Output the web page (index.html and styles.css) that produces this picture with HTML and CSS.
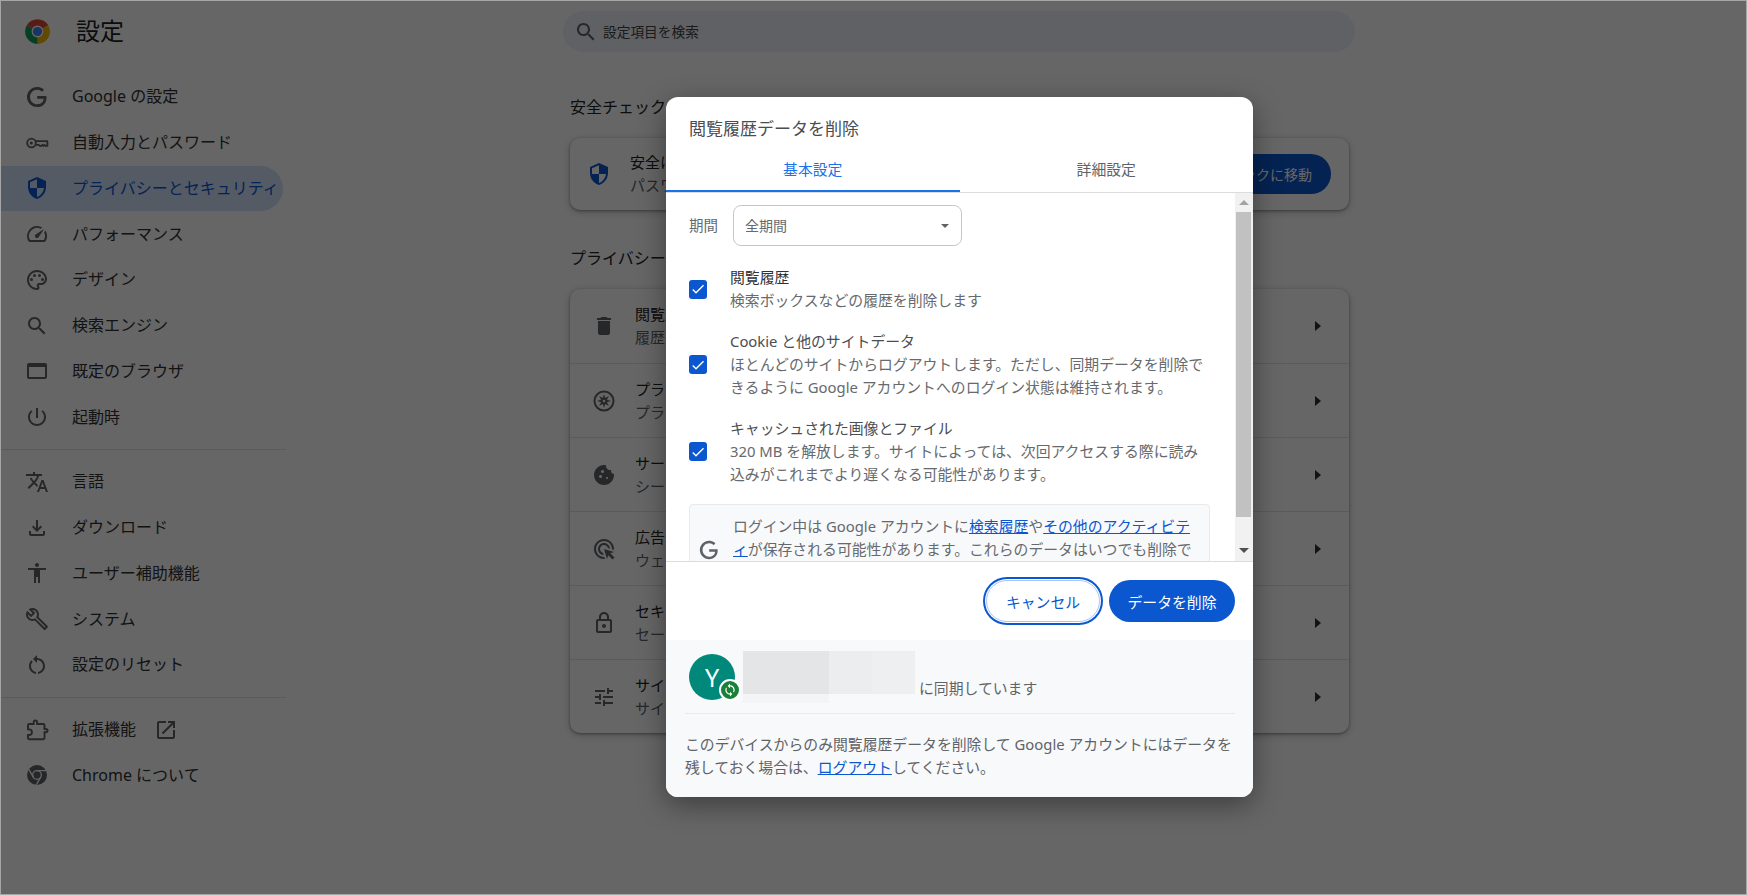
FILE: index.html
```html
<!DOCTYPE html>
<html lang="ja">
<head>
<meta charset="UTF-8">
<meta name="viewport" content="width=device-width, initial-scale=1.0">
<title>設定 - プライバシーとセキュリティ</title>
<link rel="stylesheet" href="styles.css">
</head>
<body>

<!-- icon sprite -->
<svg class="sprite" xmlns="http://www.w3.org/2000/svg">
<symbol id="i-g" viewBox="0 0 24 24"><path d="M21.35 11.1h-9.17v2.73h6.51c-.33 3.81-3.5 5.44-6.5 5.44C8.36 19.27 5 16.25 5 12c0-4.1 3.2-7.27 7.2-7.27 3.09 0 4.9 1.97 4.9 1.97L19 4.72S16.56 2 12.1 2C6.42 2 2 6.8 2 12c0 5.05 4.13 10 10.22 10 5.35 0 9.25-3.67 9.25-9.09 0-1.15-.12-1.81-.12-1.81z"/></symbol>
<symbol id="i-key" viewBox="0 0 24 24"><circle cx="6.5" cy="12" r="4.3" fill="none" stroke="currentColor" stroke-width="1.8"/><circle cx="6.3" cy="12" r="1.5"/><path fill="none" stroke="currentColor" stroke-width="1.8" stroke-linejoin="round" d="M10.8 10.2h11.6v4.6h-1.7l-1.1-1-1.1 1-1.1-1-1.1 1h-1.5l-1-1h-2.8"/></symbol>
<symbol id="i-shield" viewBox="0 0 24 24"><path d="M12 1L3 5v6c0 5.55 3.84 10.74 9 12 5.16-1.26 9-6.45 9-12V5l-9-4zm0 10.99h7c-.53 4.12-3.28 7.79-7 8.94V12H5V6.3l7-3.11v8.8z"/></symbol>
<symbol id="i-speed" viewBox="0 0 24 24"><path d="M20.38 8.57l-1.23 1.85a8 8 0 0 1-.22 7.58H5.07A8 8 0 0 1 15.58 6.85l1.85-1.23A10 10 0 0 0 3.35 19a2 2 0 0 0 1.72 1h13.85a2 2 0 0 0 1.74-1 10 10 0 0 0-.27-10.44zm-9.79 6.84a2 2 0 0 0 2.83 0l5.66-8.49-8.49 5.66a2 2 0 0 0 0 2.83z"/></symbol>
<symbol id="i-palette" viewBox="0 0 24 24"><path d="M12 22C6.49 22 2 17.51 2 12S6.49 2 12 2s10 4.04 10 9c0 3.31-2.69 6-6 6h-1.77c-.28 0-.5.22-.5.5 0 .12.05.23.13.33.41.47.64 1.06.64 1.67A2.5 2.5 0 0 1 12 22zm0-18c-4.41 0-8 3.59-8 8s3.59 8 8 8c.28 0 .5-.22.5-.5a.54.54 0 0 0-.14-.35c-.41-.46-.63-1.05-.63-1.65a2.5 2.5 0 0 1 2.5-2.5H16c2.21 0 4-1.79 4-4 0-3.86-3.59-7-8-7z"/><circle cx="6.5" cy="11.5" r="1.5"/><circle cx="9.5" cy="7.5" r="1.5"/><circle cx="14.5" cy="7.5" r="1.5"/><circle cx="17.5" cy="11.5" r="1.5"/></symbol>
<symbol id="i-search" viewBox="0 0 24 24"><path d="M15.5 14h-.79l-.28-.27C15.41 12.59 16 11.11 16 9.5 16 5.91 13.09 3 9.5 3S3 5.91 3 9.5 5.91 16 9.5 16c1.61 0 3.09-.59 4.23-1.57l.27.28v.79l5 4.99L20.49 19l-4.99-5zm-6 0C7.01 14 5 11.99 5 9.5S7.01 5 9.5 5 14 7.01 14 9.5 11.99 14 9.5 14z"/></symbol>
<symbol id="i-browser" viewBox="0 0 24 24"><path d="M20 4H4c-1.11 0-2 .9-2 2v12c0 1.1.89 2 2 2h16c1.1 0 2-.9 2-2V6c0-1.1-.89-2-2-2zm0 14H4V8h16v10z"/></symbol>
<symbol id="i-power" viewBox="0 0 24 24"><path d="M13 3h-2v10h2V3zm4.83 2.17l-1.42 1.42C17.99 7.86 19 9.81 19 12c0 3.87-3.13 7-7 7s-7-3.13-7-7c0-2.19 1.01-4.14 2.58-5.42L6.17 5.17C4.23 6.82 3 9.26 3 12c0 4.97 4.03 9 9 9s9-4.03 9-9c0-2.74-1.23-5.18-3.17-6.83z"/></symbol>
<symbol id="i-translate" viewBox="0 0 24 24"><path d="M12.87 15.07l-2.54-2.51.03-.03c1.74-1.94 2.98-4.17 3.71-6.53H17V4h-7V2H8v2H1v1.99h11.17C11.5 7.92 10.44 9.75 9 11.35 8.07 10.32 7.3 9.19 6.69 8h-2c.73 1.63 1.73 3.17 2.98 4.56l-5.09 5.02L4 19l5-5 3.11 3.11.76-2.04zM18.5 10h-2L12 22h2l1.12-3h4.75L21 22h2l-4.5-12zm-2.62 7l1.62-4.33L19.12 17h-3.24z"/></symbol>
<symbol id="i-download" viewBox="0 0 24 24"><path d="M18 15v3H6v-3H4v3c0 1.1.9 2 2 2h12c1.1 0 2-.9 2-2v-3h-2zm-1-4l-1.41-1.41L13 12.17V4h-2v8.17L8.41 9.59 7 11l5 5 5-5z"/></symbol>
<symbol id="i-access" viewBox="0 0 24 24"><path d="M12 2c1.1 0 2 .9 2 2s-.9 2-2 2-2-.9-2-2 .9-2 2-2zm9 7h-6v13h-2v-6h-2v6H9V9H3V7h18v2z"/></symbol>
<symbol id="i-build" viewBox="0 0 24 24"><path d="M22.61 18.99l-9.08-9.08c.93-2.34.45-5.1-1.44-7C9.79.61 6.21.4 3.66 2.26L7.5 6.11 6.08 7.52 2.25 3.69C.39 6.23.6 9.82 2.9 12.11c1.86 1.86 4.57 2.35 6.89 1.48l9.11 9.11c.39.39 1.02.39 1.41 0l2.3-2.3c.4-.38.4-1.01 0-1.41zm-3 1.6l-9.46-9.46c-.61.45-1.29.72-2 .82-1.36.2-2.79-.21-3.83-1.25C3.37 9.76 2.93 8.5 3 7.26l3.09 3.09 4.24-4.24-3.09-3.09c1.24-.07 2.49.37 3.44 1.31 1.08 1.08 1.49 2.57 1.24 3.96-.12.71-.42 1.37-.88 1.96l9.45 9.45-.88.89z"/></symbol>
<symbol id="i-reset" viewBox="0 0 24 24"><path d="M12 5V2L8 6l4 4V7c3.31 0 6 2.69 6 6 0 2.97-2.17 5.43-5 5.91v2.02c3.95-.49 7-3.85 7-7.93 0-4.42-3.58-8-8-8z"/><path d="M6 13c0-1.65.67-3.15 1.76-4.24L6.34 7.34C4.9 8.79 4 10.79 4 13c0 4.08 3.05 7.44 7 7.93v-2.02c-2.83-.48-5-2.94-5-5.91z"/></symbol>
<symbol id="i-ext" viewBox="0 0 24 24"><path fill="none" stroke="currentColor" stroke-width="1.9" d="M19.5 7.2V11h1.2c1.2 0 1.9.7 1.9 1.6s-.7 1.6-1.9 1.6h-1.2V20c0 .8-.6 1.2-1.2 1.2H4.2c-.7 0-1.2-.5-1.2-1.2v-3h1.1c1.6 0 2.8-1.2 2.8-2.8S5.700 11.400 4.100 11.400H3V7.200c0-.7.5-1.2 1.200-1.200h4.500V4.400c0-1.100.8-1.900 1.700-1.900s1.700.8 1.700 1.900V6h6.200c.6 0 1.200.5 1.200 1.200z"/></symbol>
<symbol id="i-open" viewBox="0 0 24 24"><path d="M19 19H5V5h7V3H5a2 2 0 0 0-2 2v14a2 2 0 0 0 2 2h14c1.1 0 2-.9 2-2v-7h-2v7zM14 3v2h3.59l-9.83 9.83 1.41 1.41L19 6.41V10h2V3h-7z"/></symbol>
<symbol id="i-chrome" viewBox="0 0 24 24"><circle cx="12" cy="12" r="10"/><g fill="none" stroke="#fff" stroke-width="1.3"><circle cx="12" cy="12" r="4.3"/><path d="M12 7.700h9M15.700 14.150l-4.500 7.800M8.300 14.150l-4.500-7.800"/></g></symbol>
<symbol id="i-trash" viewBox="0 0 24 24"><path d="M6 19c0 1.1.9 2 2 2h8c1.1 0 2-.9 2-2V7H6v12zM19 4h-3.5l-1-1h-5l-1 1H5v2h14V4z"/></symbol>
<symbol id="i-compass" viewBox="0 0 24 24"><path fill-rule="evenodd" d="M12 1.500a10.500 10.500 0 1 1 0 21 10.500 10.500 0 0 1 0-21zm0 2a8.500 8.500 0 1 0 0 17 8.500 8.500 0 0 0 0-17z"/><path d="M12 5l1.200 4.100 3.800-2.100-2.100 3.800L19 12l-4.100 1.200 2.100 3.800-3.800-2.100L12 19l-1.200-4.100-3.800 2.100 2.100-3.800L5 12l4.100-1.200L7 7l3.800 2.100z"/><circle cx="12" cy="12" r="1.200" fill="#fff"/></symbol>
<symbol id="i-cookie" viewBox="0 0 24 24"><path d="M21.95 10.99c-1.79-.03-3.7-1.95-2.68-4.22-2.98 1-5.77-1.59-5.19-4.56C6.95.71 2 6.58 2 12c0 5.52 4.48 10 10 10 5.89 0 10.54-5.08 9.95-11.01zM8.5 15c-.83 0-1.5-.67-1.5-1.5S7.67 12 8.5 12s1.5.67 1.5 1.5S9.33 15 8.5 15zm2-5C9.67 10 9 9.33 9 8.5S9.67 7 10.5 7s1.5.67 1.5 1.5-.67 1.5-1.5 1.5zm4.5 6c-.55 0-1-.45-1-1s.45-1 1-1 1 .45 1 1-.45 1-1 1z"/></symbol>
<symbol id="i-ads" viewBox="0 0 24 24"><path d="M11.71 17.99C8.53 17.84 6 15.22 6 12c0-3.31 2.69-6 6-6 3.22 0 5.84 2.53 5.99 5.71l-2.1-.63C15.48 9.31 13.89 8 12 8c-2.21 0-4 1.79-4 4 0 1.89 1.31 3.48 3.08 3.89l.63 2.1zM22 12c0 .3-.01.6-.04.9l-1.97-.59c.01-.1.01-.21.01-.31 0-4.42-3.58-8-8-8s-8 3.58-8 8 3.58 8 8 8c.1 0 .21 0 .31-.01l.59 1.97c-.3.03-.6.04-.9.04-5.52 0-10-4.48-10-10S6.48 2 12 2s10 4.48 10 10zm-3.77 4.26L22 15l-10-3 3 10 1.26-3.77 4.27 4.27 1.98-1.98-4.28-4.26z"/></symbol>
<symbol id="i-lock" viewBox="0 0 24 24"><path d="M18 8h-1V6c0-2.76-2.24-5-5-5S7 3.24 7 6v2H6c-1.1 0-2 .9-2 2v10c0 1.1.9 2 2 2h12c1.1 0 2-.9 2-2V10c0-1.1-.9-2-2-2zM9 6c0-1.66 1.34-3 3-3s3 1.34 3 3v2H9V6zm9 14H6V10h12v10zm-6-3c1.1 0 2-.9 2-2s-.9-2-2-2-2 .9-2 2 .9 2 2 2z"/></symbol>
<symbol id="i-tune" viewBox="0 0 24 24"><path d="M3 17v2h6v-2H3zM3 5v2h10V5H3zm10 16v-2h8v-2h-8v-2h-2v6h2zM7 9v2H3v2h4v2h2V9H7zm14 4v-2H11v2h10zm-6-4h2V7h4V5h-4V3h-2v6z"/></symbol>
<symbol id="i-sync" viewBox="0 0 24 24"><path d="M12 4V1L8 5l4 4V6c3.31 0 6 2.69 6 6 0 1.01-.25 1.97-.7 2.8l1.46 1.46C19.54 15.03 20 13.57 20 12c0-4.42-3.58-8-8-8zm0 14c-3.31 0-6-2.69-6-6 0-1.01.25-1.97.7-2.8L5.24 7.74C4.46 8.97 4 10.43 4 12c0 4.42 3.58 8 8 8v3l4-4-4-4v3z"/></symbol>
<symbol id="i-check" viewBox="0 0 24 24"><path d="M9 16.17L4.83 12l-1.42 1.41L9 19 21 7l-1.41-1.41z"/></symbol>
</svg>

<div class="window">

<!-- Settings page behind the dialog -->
<header class="topbar">
<div class="brand">
<svg class="logo" viewBox="0 0 48 48">
<path fill="#db4437" d="M24 24L4.95 13A22 22 0 0 1 43.05 13z"/>
<path fill="#f4b400" d="M24 24L43.05 13A22 22 0 0 1 24 46z"/>
<path fill="#0f9d58" d="M24 24L24 46A22 22 0 0 1 4.95 13z"/>
<circle cx="24" cy="24" r="10.5" fill="#fff"/>
<circle cx="24" cy="24" r="8.2" fill="#4285f4"/>
</svg>
<span class="brand-title">設定</span>
</div>
<div class="search">
<svg class="icon"><use href="#i-search"/></svg>
<span class="search-text">設定項目を検索</span>
</div>
</header>

<div class="page">
<nav class="sidebar">
<a class="nav-item"><svg class="icon"><use href="#i-g"/></svg><span class="nav-label">Google の設定</span></a>
<a class="nav-item"><svg class="icon"><use href="#i-key"/></svg><span class="nav-label">自動入力とパスワード</span></a>
<a class="nav-item selected"><svg class="icon"><use href="#i-shield"/></svg><span class="nav-label">プライバシーとセキュリティ</span></a>
<a class="nav-item"><svg class="icon"><use href="#i-speed"/></svg><span class="nav-label">パフォーマンス</span></a>
<a class="nav-item"><svg class="icon"><use href="#i-palette"/></svg><span class="nav-label">デザイン</span></a>
<a class="nav-item"><svg class="icon"><use href="#i-search"/></svg><span class="nav-label">検索エンジン</span></a>
<a class="nav-item"><svg class="icon"><use href="#i-browser"/></svg><span class="nav-label">既定のブラウザ</span></a>
<a class="nav-item"><svg class="icon"><use href="#i-power"/></svg><span class="nav-label">起動時</span></a>
<div class="nav-sep"></div>
<a class="nav-item"><svg class="icon"><use href="#i-translate"/></svg><span class="nav-label">言語</span></a>
<a class="nav-item"><svg class="icon"><use href="#i-download"/></svg><span class="nav-label">ダウンロード</span></a>
<a class="nav-item"><svg class="icon"><use href="#i-access"/></svg><span class="nav-label">ユーザー補助機能</span></a>
<a class="nav-item"><svg class="icon"><use href="#i-build"/></svg><span class="nav-label">システム</span></a>
<a class="nav-item"><svg class="icon"><use href="#i-reset"/></svg><span class="nav-label">設定のリセット</span></a>
<div class="nav-sep"></div>
<a class="nav-item"><svg class="icon"><use href="#i-ext"/></svg><span class="nav-label">拡張機能</span><svg class="icon open-icon"><use href="#i-open"/></svg></a>
<a class="nav-item"><svg class="icon"><use href="#i-chrome"/></svg><span class="nav-label">Chrome について</span></a>
</nav>

<main class="content">
<h2 class="section-title">安全チェック</h2>
<div class="card safety-card">
<svg class="icon shield-icon"><use href="#i-shield"/></svg>
<div class="row-text">
<div class="row-main">安全に関する項目を確認します</div>
<div class="row-sub">パスワードや拡張機能を確認します</div>
</div>
<button class="safety-btn">安全チェックに移動</button>
</div>

<h2 class="section-title second">プライバシーとセキュリティ</h2>
<div class="card">
<div class="row"><svg class="icon"><use href="#i-trash"/></svg><div class="row-text"><div class="row-main">閲覧履歴データの削除</div><div class="row-sub">履歴、Cookie、キャッシュなどを削除します</div></div><span class="arrow"></span></div>
<div class="row"><svg class="icon"><use href="#i-compass"/></svg><div class="row-text"><div class="row-main">プライバシー ガイド</div><div class="row-sub">プライバシーとセキュリティの設定を確認します</div></div><span class="arrow"></span></div>
<div class="row"><svg class="icon"><use href="#i-cookie"/></svg><div class="row-text"><div class="row-main">サードパーティ Cookie</div><div class="row-sub">シークレット モードではブロックされています</div></div><span class="arrow"></span></div>
<div class="row"><svg class="icon"><use href="#i-ads"/></svg><div class="row-text"><div class="row-main">広告プライバシー</div><div class="row-sub">ウェブサイトに表示される広告を設定します</div></div><span class="arrow"></span></div>
<div class="row"><svg class="icon"><use href="#i-lock"/></svg><div class="row-text"><div class="row-main">セキュリティ</div><div class="row-sub">セーフ ブラウジングなどの設定</div></div><span class="arrow"></span></div>
<div class="row"><svg class="icon"><use href="#i-tune"/></svg><div class="row-text"><div class="row-main">サイトの設定</div><div class="row-sub">サイトが使用、表示できる情報を管理します</div></div><span class="arrow"></span></div>
</div>
</main>
</div>

<div class="backdrop"></div>

<!-- Clear browsing data dialog -->
<div class="dialog">
<h1 class="dialog-title">閲覧履歴データを削除</h1>

<div class="tabs">
<div class="tab active">基本設定</div>
<div class="tab">詳細設定</div>
</div>

<div class="dialog-body">
<div class="scroll-area">
<div class="period">
<span class="period-label">期間</span>
<div class="select"><span>全期間</span><span class="caret"></span></div>
</div>

<div class="check-item">
<span class="checkbox"><svg viewBox="0 0 24 24"><use href="#i-check"/></svg></span>
<div class="check-text">
<div class="check-title dark">閲覧履歴</div>
<div>検索ボックスなどの履歴を削除します</div>
</div>
</div>

<div class="check-item">
<span class="checkbox"><svg viewBox="0 0 24 24"><use href="#i-check"/></svg></span>
<div class="check-text">
<div class="check-title">Cookie と他のサイトデータ</div>
<div>ほとんどのサイトからログアウトします。ただし、同期データを削除できるように Google アカウントへのログイン状態は維持されます。</div>
</div>
</div>

<div class="check-item">
<span class="checkbox"><svg viewBox="0 0 24 24"><use href="#i-check"/></svg></span>
<div class="check-text">
<div class="check-title">キャッシュされた画像とファイル</div>
<div>320 MB を解放します。サイトによっては、次回アクセスする際に読み込みがこれまでより遅くなる可能性があります。</div>
</div>
</div>

<div class="notice">
<svg class="notice-icon"><use href="#i-g"/></svg>
<div>ログイン中は Google アカウントに<a href="#">検索履歴</a>や<a href="#">その他のアクティビテ<br>ィ</a>が保存される可能性があります。これらのデータはいつでも削除できます。</div>
</div>
</div>

<div class="scrollbar">
<div class="sb-btn"><span class="sb-up"></span></div>
<div class="sb-thumb"></div>
<div class="sb-space"></div>
<div class="sb-btn sb-btn-down"><span class="sb-down"></span></div>
</div>
</div>

<div class="actions">
<button class="btn cancel-btn">キャンセル</button>
<button class="btn delete-btn">データを削除</button>
</div>

<div class="sync">
<div class="sync-row">
<div class="avatar">Y<span class="sync-badge"><svg viewBox="0 0 24 24"><use href="#i-sync"/></svg></span></div>
<div class="redacted">
<div class="redacted-top"><span class="r1"></span><span class="r2"></span><span class="r3"></span></div>
<div class="redacted-low"></div>
</div>
<span class="sync-text">に同期しています</span>
</div>
<p class="sync-note">このデバイスからのみ閲覧履歴データを削除して Google アカウントにはデータを残しておく場合は、<a href="#">ログアウト</a>してください。</p>
</div>
</div>

</div>
</body>
</html>
```

FILE: styles.css
```css
* {
box-sizing: border-box;
}

html, body {
margin: 0;
height: 100%;
overflow: hidden;
}

body {
font-family: "Noto Sans", "Noto Sans CJK JP", sans-serif;
font-size: 15px;
color: #3c4043;
background-color: #fff;
}

a {
color: #0b57d0;
}

.sprite {
display: none;
}

.window {
position: relative;
height: 895px;
border: 1px solid #a6a6a6;
overflow: hidden;
}

.icon {
width: 24px;
height: 24px;
flex: none;
fill: #5f6368;
color: #5f6368;
}

/* top bar */
.topbar {
display: flex;
height: 62px;
padding-top: 10px;
}

.brand {
display: flex;
align-items: center;
width: 562px;
height: 41px;
padding-left: 23px;
}

.logo {
width: 27px;
height: 27px;
}

.brand-title {
margin: 0 0 4px 25px;
font-size: 24px;
color: #202124;
}

.search {
display: flex;
align-items: center;
gap: 5px;
width: 792px;
height: 41px;
padding-left: 11px;
border-radius: 21px;
background-color: #edf2fa;
font-size: 13.7px;
color: #444;
}

.search-text {
margin-bottom: 2px;
}

/* sidebar */
.page {
display: flex;
}

.sidebar {
width: 285px;
flex: none;
padding-top: 11px;
}

.nav-item {
display: flex;
align-items: center;
gap: 23px;
width: 282px;
height: 45.75px;
padding-left: 24px;
border-radius: 0 23px 23px 0;
font-size: 16px;
color: #303134;
}

.nav-label {
margin-bottom: 3px;
}

.nav-item.selected {
background-color: #d3e3fd;
color: #0b57d0;
}

.nav-item.selected .icon {
fill: #0b57d0;
}

.nav-sep {
height: 1px;
margin: 9px 0;
background-color: #e3e3e3;
}

.open-icon {
margin-left: -5px;
}

/* page content */
.content {
width: 779px;
flex: none;
margin-left: 284px;
padding-top: 32px;
}

.section-title {
margin: 0 0 19px;
font-size: 16px;
font-weight: 400;
line-height: 24px;
color: #202124;
}

.section-title.second {
margin-top: 36px;
}

.card {
background-color: #fff;
border-radius: 10px;
box-shadow: 0 1px 3px rgba(0, 0, 0, 0.35), 0 2px 8px rgba(0, 0, 0, 0.2);
}

.safety-card {
display: flex;
align-items: center;
gap: 19px;
height: 72px;
padding: 0 18px 0 17px;
}

.row-text {
flex: 1;
line-height: 23px;
}

.row-main {
color: #202124;
}

.row-sub {
color: #5f6368;
}

.shield-icon {
fill: #0b57d0;
}

.safety-btn {
height: 40px;
padding: 0 19px;
border: none;
border-radius: 20px;
background-color: #0b57d0;
font-family: inherit;
font-size: 14px;
color: #fff;
}

.row {
display: flex;
align-items: center;
gap: 19px;
height: 74px;
padding: 0 28px 0 22px;
border-top: 1px solid #e3e3e3;
}

.row:first-child {
border-top: none;
}

.arrow {
width: 0;
height: 0;
border-top: 5px solid transparent;
border-bottom: 5px solid transparent;
border-left: 6px solid #303030;
}

/* modal */
.backdrop {
position: absolute;
inset: 0;
background-color: rgba(0, 0, 0, 0.6);
}

.dialog {
position: absolute;
left: 665px;
top: 96px;
display: flex;
flex-direction: column;
width: 587px;
height: 700px;
border-radius: 12px;
background-color: #fff;
box-shadow: 0 8px 28px rgba(0, 0, 0, 0.4);
overflow: hidden;
}

.dialog-title {
margin: 0;
padding: 20px 23px 0;
font-size: 17px;
font-weight: 400;
line-height: 24px;
color: #4a4d51;
}

.tabs {
display: flex;
height: 52px;
border-bottom: 1px solid #dadce0;
}

.tab {
display: flex;
align-items: center;
justify-content: center;
width: 50%;
height: 51px;
padding-top: 4px;
font-size: 14.85px;
color: #5f6368;
}

.tab.active {
border-bottom: 2px solid #1a73e8;
padding-top: 6px;
color: #1a73e8;
}

.dialog-body {
display: flex;
height: 369px;
border-bottom: 1px solid #dadce0;
}

.scroll-area {
flex: 1;
padding: 12px 25px 0 23px;
overflow: hidden;
font-size: 14.85px;
line-height: 23px;
color: #666a6e;
}

.period {
display: flex;
align-items: center;
gap: 15px;
margin-bottom: 20px;
}

.period-label {
font-size: 14.5px;
}

.select {
display: flex;
align-items: center;
justify-content: space-between;
width: 229px;
height: 41px;
padding: 0 12px 0 11px;
border: 1px solid #c4c7c5;
border-radius: 8px;
font-size: 14px;
}

.caret {
width: 0;
height: 0;
border-left: 4px solid transparent;
border-right: 4px solid transparent;
border-top: 4px solid #5f6368;
}

.check-item {
display: flex;
align-items: center;
gap: 23px;
margin-bottom: 18px;
}

.checkbox {
display: flex;
align-items: center;
justify-content: center;
width: 18px;
height: 19px;
flex: none;
border-radius: 3px;
background-color: #0b57d0;
}

.checkbox svg {
width: 16px;
height: 16px;
fill: #fff;
}

.check-title {
color: #4a4d51;
}

.check-title.dark {
color: #303134;
}

.notice {
display: flex;
align-items: center;
gap: 13px;
padding: 10px 16px 6px 8px;
border: 1px solid #e8eaed;
border-radius: 4px;
background-color: #f8f9fa;
}

.notice-icon {
width: 22px;
height: 22px;
flex: none;
fill: #5f6368;
}

/* scrollbar */
.scrollbar {
display: flex;
flex-direction: column;
width: 18px;
flex: none;
background-color: #f1f1f1;
}

.sb-btn {
display: flex;
align-items: center;
justify-content: center;
height: 19px;
}

.sb-btn-down {
height: 22px;
}

.sb-up {
width: 0;
height: 0;
border-left: 5px solid transparent;
border-right: 5px solid transparent;
border-bottom: 5px solid #a3a3a3;
}

.sb-down {
width: 0;
height: 0;
border-left: 5px solid transparent;
border-right: 5px solid transparent;
border-top: 5px solid #505050;
}

.sb-thumb {
height: 305px;
margin: 0 2px 0 1px;
background-color: #c1c1c1;
}

.sb-space {
flex: 1;
}

/* buttons */
.actions {
display: flex;
align-items: center;
justify-content: flex-end;
gap: 9px;
height: 78px;
padding-right: 18px;
}

.btn {
height: 42px;
border-radius: 21px;
font-family: inherit;
font-size: 14.85px;
}

.cancel-btn {
width: 114px;
border: 1px solid #a8c7fa;
background-color: #fff;
color: #0b57d0;
box-shadow: 0 0 0 1px #fff, 0 0 0 3px #0b57d0;
}

.delete-btn {
width: 126px;
border: none;
background-color: #0b57d0;
color: #fff;
}

/* sync footer */
.sync {
flex: 1;
padding: 0 18px 0 19px;
background-color: #f8f9fa;
font-size: 14.85px;
line-height: 23px;
color: #5f6368;
}

.sync-row {
display: flex;
height: 74px;
padding: 11px 0 0 4px;
border-bottom: 1px solid #e8eaed;
}

.avatar {
position: relative;
display: flex;
align-items: center;
justify-content: center;
width: 46px;
height: 46px;
margin-top: 3px;
border-radius: 50%;
background-color: #00897b;
font-size: 25px;
color: #fff;
}

.sync-badge {
position: absolute;
right: -6px;
bottom: -1px;
display: flex;
align-items: center;
justify-content: center;
width: 22px;
height: 22px;
border: 2px solid #fff;
border-radius: 50%;
background-color: #188038;
}

.sync-badge svg {
width: 14px;
height: 14px;
fill: #fff;
}

.redacted {
width: 172px;
margin-left: 8px;
}

.redacted-top {
display: flex;
height: 43px;
}

.redacted-top span {
display: block;
}

.r1 {
width: 86px;
background-color: #e4e5e7;
}

.r2 {
width: 43px;
background-color: #ecedef;
}

.r3 {
width: 43px;
background-color: #eeeff1;
}

.redacted-low {
width: 86px;
height: 9px;
background-color: #f3f4f6;
}

.sync-text {
margin: 26px 0 0 4px;
}

.sync-note {
margin: 19px 0 0;
}
```
